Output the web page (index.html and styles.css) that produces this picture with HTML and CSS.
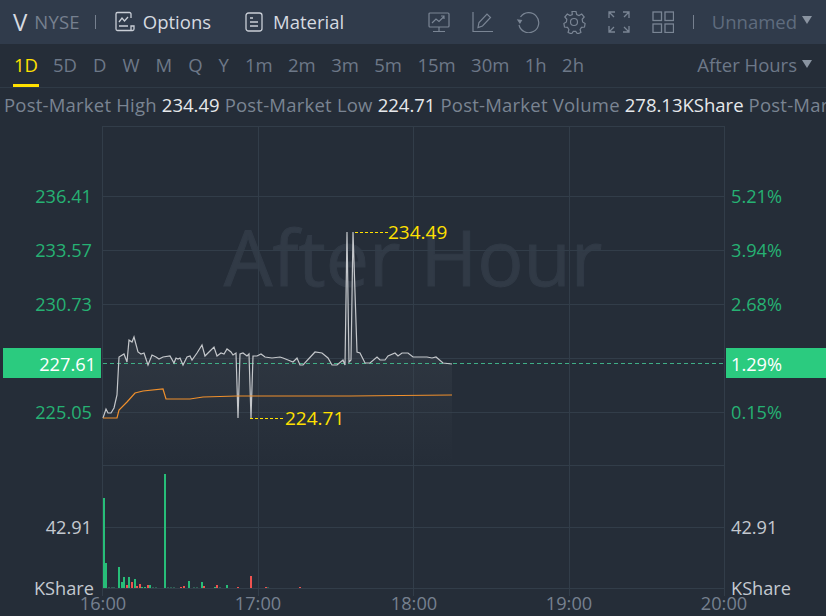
FILE: index.html
```html
<!DOCTYPE html>
<html lang="en">
<head>
  <meta charset="UTF-8">
  <title>V NYSE After Hours</title>
  <link rel="stylesheet" href="styles.css">
</head>
<body>
  <!-- Top toolbar -->
  <header class="toolbar">
    <span class="symbol">V</span>
    <span class="market">NYSE</span>
    <span class="divider"></span>
    <a class="tool tool-options">
      <svg width="22" height="22" viewBox="0 0 22 22" fill="none" stroke="#c9ced6" stroke-width="1.3">
        <path d="M17 7V3a1.5 1.5 0 0 0-1.5-1.5h-12A1.5 1.5 0 0 0 2 3v15a1.5 1.5 0 0 0 1.5 1.5h15a1.5 1.5 0 0 0 1.5-1.5v-3h-3v4.500"/>
        <path d="M5 11l3-4 2.500 3 3.500-4M5 15h9"/>
      </svg>
      Options
    </a>
    <a class="tool tool-material">
      <svg width="18" height="22" viewBox="0 0 18 22" fill="none" stroke="#c9ced6" stroke-width="1.3">
        <rect x="1" y="2" width="16" height="18" rx="2.500"/>
        <path d="M5 7h3M5 11h8M5 15h8"/>
      </svg>
      Material
    </a>
    <div class="tool-icons">
      <svg width="22" height="22" viewBox="0 0 22 22" fill="none" stroke="#7a8594" stroke-width="1.2">
        <rect x="1" y="2" width="20" height="14" rx="1"/>
        <path d="M4 12l4-4 3 2.500 5-5M13 5h3v3M11 16v4M5 20.500h12"/>
      </svg>
      <svg width="22" height="22" viewBox="0 0 22 22" fill="none" stroke="#7a8594" stroke-width="1.2">
        <path d="M1 1v19.500h20M6 16.500l1-5 8-8.500 3.500 3.500-8 8.500z"/>
      </svg>
      <svg width="24" height="22" viewBox="0 0 24 22" fill="none" stroke="#7a8594" stroke-width="1.2">
        <path d="M4.500 6A10 10 0 1 1 3 14"/>
        <path d="M1 8l2.500 5 3-3.500z" fill="#7a8594" stroke="none" transform="rotate(-8 3 10)"/>
      </svg>
      <svg width="24" height="24" viewBox="0 0 24 24" fill="none" stroke="#7a8594" stroke-width="1.2">
        <path d="M10 1.500h4l.7 3 2.300 1 2.700-1.500 2.500 3-2 2.300.4 2.700 2.500 1.500-.6 3.500-3 .4-1.400 2.100.8 3-3.400 1.400-1.800-2.500h-2.400l-1.800 2.500-3.400-1.400.8-3-1.400-2.100-3-.4-.6-3.500 2.500-1.500.4-2.700-2-2.300 2.500-3 2.700 1.500 2.300-1z"/>
        <circle cx="12" cy="12" r="3.500"/>
      </svg>
      <svg width="22" height="22" viewBox="0 0 22 22" fill="none" stroke="#7a8594" stroke-width="1.3">
        <path d="M1 7V1h6M1 1l5 5M15 1h6v6M21 1l-5 5M1 15v6h6M1 21l5-5M21 15v6h-6M21 21l-5-5"/>
      </svg>
      <svg width="22" height="22" viewBox="0 0 22 22" fill="none" stroke="#7a8594" stroke-width="1.3">
        <rect x="1" y="1" width="8.500" height="8.500"/>
        <rect x="13" y="1" width="8.500" height="8.500"/>
        <rect x="1" y="13" width="8.500" height="8.500"/>
        <rect x="13" y="13" width="8.500" height="8.500"/>
      </svg>
    </div>
    <span class="divider divider-right"></span>
    <span class="layout-name">Unnamed</span>
    <span class="caret"></span>
  </header>

  <!-- Period tabs -->
  <nav class="periods">
    <a class="period active">1D</a>
    <a class="period">5D</a>
    <a class="period">D</a>
    <a class="period">W</a>
    <a class="period">M</a>
    <a class="period">Q</a>
    <a class="period">Y</a>
    <a class="period intraday">1m</a>
    <a class="period intraday">2m</a>
    <a class="period intraday">3m</a>
    <a class="period intraday">5m</a>
    <a class="period intraday">15m</a>
    <a class="period intraday">30m</a>
    <a class="period intraday">1h</a>
    <a class="period intraday">2h</a>
    <span class="session">After Hours</span>
    <span class="caret"></span>
  </nav>

  <!-- Post-market stats -->
  <div class="stats">
    Post-Market High <b>234.49</b> Post-Market Low <b>224.71</b> Post-Market Volume <b>278.13KShare</b> Post-Market Turnover
  </div>

  <!-- Chart, coordinates in the viewBox are page pixels -->
  <svg class="chart" width="826" height="490" viewBox="0 126 826 490">
    <defs>
      <linearGradient id="areaFill" x1="0" y1="0" x2="0" y2="1">
        <stop offset="0" stop-color="#3a424c" stop-opacity="0.9"/>
        <stop offset="1" stop-color="#3a424c" stop-opacity="0"/>
      </linearGradient>
    </defs>

    <text class="watermark" x="413" y="286">After Hour</text>

    <path class="grid" d="M103 126.500H724M103 196.500H724M103 250.500H724M103 304.500H724M103 358.500H724M103 412.500H724M103 465.500H724M103 527.500H724M103 588.500H724"/>
    <path class="grid" d="M102.500 126V596M258.500 126V596M413.500 126V596M569.500 126V596M724.500 126V596"/>

    <path class="area" d="M103 418L106 409 108 413 111 413 114 408 117 395 119 357 124 354 127 362 129 340 132 342 134 337 138 352 141 354 144 353 148 365 152 355 156 357 159 359 163 357 170 356 174 363 176 358 178 359 180 358 183 365 187 357 190 356 192 360 197 353 202 345 205 356 210 351 214 347 217 356 221 353 224 354 227 349 231 352 233 355 236 353 238 418 240 354 243 353 247 356 249 354 251 418 253 356 257 356 261 354 265 357 272 358 280 357 283 358 288 360 293 362 297 358 300 365 303 365 315 352 322 353 328 358 332 365 337 365 343 360 345 365 347 232 349 362 351 360 353 232 357 352 360 353 365 363 370 363 377 357 380 360 385 360 388 356 395 353 398 356 402 353 408 353 413 357 427 357 432 358 436 357 443 363 452 364V465H103Z"/>

    <path class="dash-last" d="M103 363.500H724"/>
    <polyline class="price" points="103,418 106,409 108,413 111,413 114,408 117,395 119,357 124,354 127,362 129,340 132,342 134,337 138,352 141,354 144,353 148,365 152,355 156,357 159,359 163,357 170,356 174,363 176,358 178,359 180,358 183,365 187,357 190,356 192,360 197,353 202,345 205,356 210,351 214,347 217,356 221,353 224,354 227,349 231,352 233,355 236,353 238,418 240,354 243,353 247,356 249,354 251,418 253,356 257,356 261,354 265,357 272,358 280,357 283,358 288,360 293,362 297,358 300,365 303,365 315,352 322,353 328,358 332,365 337,365 343,360 345,365 347,232 349,362 351,360 353,232 357,352 360,353 365,363 370,363 377,357 380,360 385,360 388,356 395,353 398,356 402,353 408,353 413,357 427,357 432,358 436,357 443,363 452,364"/>
    <polyline class="average" points="103,418 117,418 119,410 127,402 135,393 143,391 163,389 166,399 190,399 203,397 237,396 290,396 350,396 452,395"/>

    <path class="leader" d="M355 232.500H388M250 418.500H283"/>
    <text class="peak" x="388" y="239">234.49</text>
    <text class="peak" x="285" y="425">224.71</text>

    <!-- Volume bars -->
    <path class="vol-up" d="M104 588V498M106 588V563M119 588V567M122 588V582M124 588V577M129 588V577M135 588V579M142 588V587M145 588V587M150 588V585M165 588V474M189 588V581M202 588V582M215 588V587M227 588V585"/>
    <path class="vol-flat" d="M109 588V587M112 588V587M114 588V587M153 588V587M156 588V587M168 588V587M171 588V587M174 588V587M194 588V587M197 588V587M220 588V587M268 588V587"/>
    <path class="vol-down" d="M127 588V585M132 588V582M137 588V586M140 588V584M148 588V585M181 588V587M184 588V586M204 588V586M217 588V585M238 588V587M251 588V576M266 588V587M300 588V587"/>

    <!-- Left axis -->
    <text class="axis-up" x="92" y="203" text-anchor="end">236.41</text>
    <text class="axis-up" x="92" y="257" text-anchor="end">233.57</text>
    <text class="axis-up" x="92" y="311" text-anchor="end">230.73</text>
    <text class="axis-up" x="92" y="419" text-anchor="end">225.05</text>
    <text class="axis-grey" x="92" y="534" text-anchor="end">42.91</text>
    <text class="axis-grey" x="94" y="595" text-anchor="end">KShare</text>
    <rect class="tag" x="3" y="348" width="98" height="30"/>
    <text class="tag-text" x="96" y="371" text-anchor="end">227.61</text>

    <!-- Right axis -->
    <text class="axis-up" x="731" y="203">5.21%</text>
    <text class="axis-up" x="731" y="257">3.94%</text>
    <text class="axis-up" x="731" y="311">2.68%</text>
    <text class="axis-up" x="731" y="419">0.15%</text>
    <text class="axis-grey" x="731" y="534">42.91</text>
    <text class="axis-grey" x="731" y="595">KShare</text>
    <rect class="tag" x="726" y="348" width="100" height="30"/>
    <text class="tag-text" x="731" y="371">1.29%</text>

    <!-- Time axis -->
    <text class="axis-time" x="103" y="610" text-anchor="middle">16:00</text>
    <text class="axis-time" x="258" y="610" text-anchor="middle">17:00</text>
    <text class="axis-time" x="414" y="610" text-anchor="middle">18:00</text>
    <text class="axis-time" x="569" y="610" text-anchor="middle">19:00</text>
    <text class="axis-time" x="724" y="610" text-anchor="middle">20:00</text>
  </svg>
</body>
</html>
```

FILE: styles.css
```css
/* General page styles */
body {
  margin: 0;
  width: 826px;
  height: 616px;
  overflow: hidden;
  background: #252d38;
  font-family: "Open Sans", "Noto Sans", sans-serif;
  font-size: 18.5px;
  color: #76808f;
}

/* Top toolbar */
.toolbar {
  display: flex;
  align-items: center;
  height: 44px;
  padding-left: 13px;
  background: #303b4b;
}

.symbol {
  font-size: 24px;
  color: #d6dae0;
  margin-right: 7px;
  margin-bottom: 2px;
}

.market {
  color: #76808f;
  letter-spacing: 0.2px;
  margin-bottom: 2px;
}

.divider {
  width: 1px;
  height: 14px;
  margin: 0 18px 0 15px;
  background: #76808f;
}

.tool {
  display: flex;
  align-items: center;
  color: #d6dae0;
  gap: 7px;
  margin-bottom: 2px;
}

.tool svg {
  margin-top: 2px;
}

.tool-material {
  margin-left: 34px;
  gap: 10px;
}

.tool-icons {
  display: flex;
  align-items: center;
  gap: 22px;
  margin-left: auto;
}

.divider-right {
  margin: 0 18px 0 19px;
}

.layout-name {
  color: #5f6c7e;
  margin-bottom: 2px;
}

.caret {
  width: 0;
  height: 0;
  margin: 0 14px 4px 5px;
  border-left: 5px solid transparent;
  border-right: 5px solid transparent;
  border-top: 8px solid #8a94a1;
}

/* Period tabs */
.periods {
  display: flex;
  align-items: center;
  height: 43px;
  padding-left: 13px;
  border-bottom: 1px solid #2f3a46;
}

.period {
  display: flex;
  align-items: center;
  height: 100%;
  box-sizing: border-box;
  margin-right: 16px;
  padding-bottom: 2px;
  color: #6d7888;
}

.period.intraday {
  margin-right: 15.4px;
}

.period.active {
  color: #ffe000;
  border-bottom: 3px solid #ffe000;
  padding: 1px 1px 0;
  margin-right: 14px;
}

.session {
  margin-left: auto;
  margin-bottom: 2px;
  color: #6d7888;
}

/* Post-market stats */
.stats {
  height: 38px;
  line-height: 34px;
  padding-left: 4px;
  white-space: nowrap;
  overflow: hidden;
  letter-spacing: 0.22px;
  color: #7a8492;
}

.stats b {
  font-weight: normal;
  color: #e6e8eb;
  letter-spacing: 0;
}

/* Chart */
.chart {
  display: block;
}

.chart text {
  font-family: "Open Sans", "Noto Sans", sans-serif;
  font-size: 18.2px;
}

.chart .watermark {
  font-size: 77px;
  fill: #313a46;
  stroke: #313a46;
  stroke-width: 1;
  text-anchor: middle;
}

.grid {
  fill: none;
  stroke: #323d49;
  stroke-width: 1;
}

.area {
  fill: url(#areaFill);
}

.dash-last {
  stroke: #3fae86;
  stroke-dasharray: 4 3;
}

.price {
  fill: none;
  stroke: #c4c7cb;
  stroke-width: 1.2;
}

.average {
  fill: none;
  stroke: #f0902c;
  stroke-width: 1.2;
}

.leader {
  stroke: #ffe000;
  stroke-dasharray: 3 2;
}

.chart .peak {
  fill: #ffe000;
  font-size: 19px;
}

.vol-up {
  stroke: #27bd78;
  stroke-width: 2;
}

.vol-flat {
  stroke: #2f5f55;
  stroke-width: 2;
}

.vol-down {
  stroke: #ef5350;
  stroke-width: 2;
}

.axis-up {
  fill: #26b173;
}

.axis-grey {
  fill: #c4c9d0;
}

.axis-time {
  fill: #76808f;
}

.tag {
  fill: #2bcb7f;
}

.tag-text {
  fill: #fff;
}
```
